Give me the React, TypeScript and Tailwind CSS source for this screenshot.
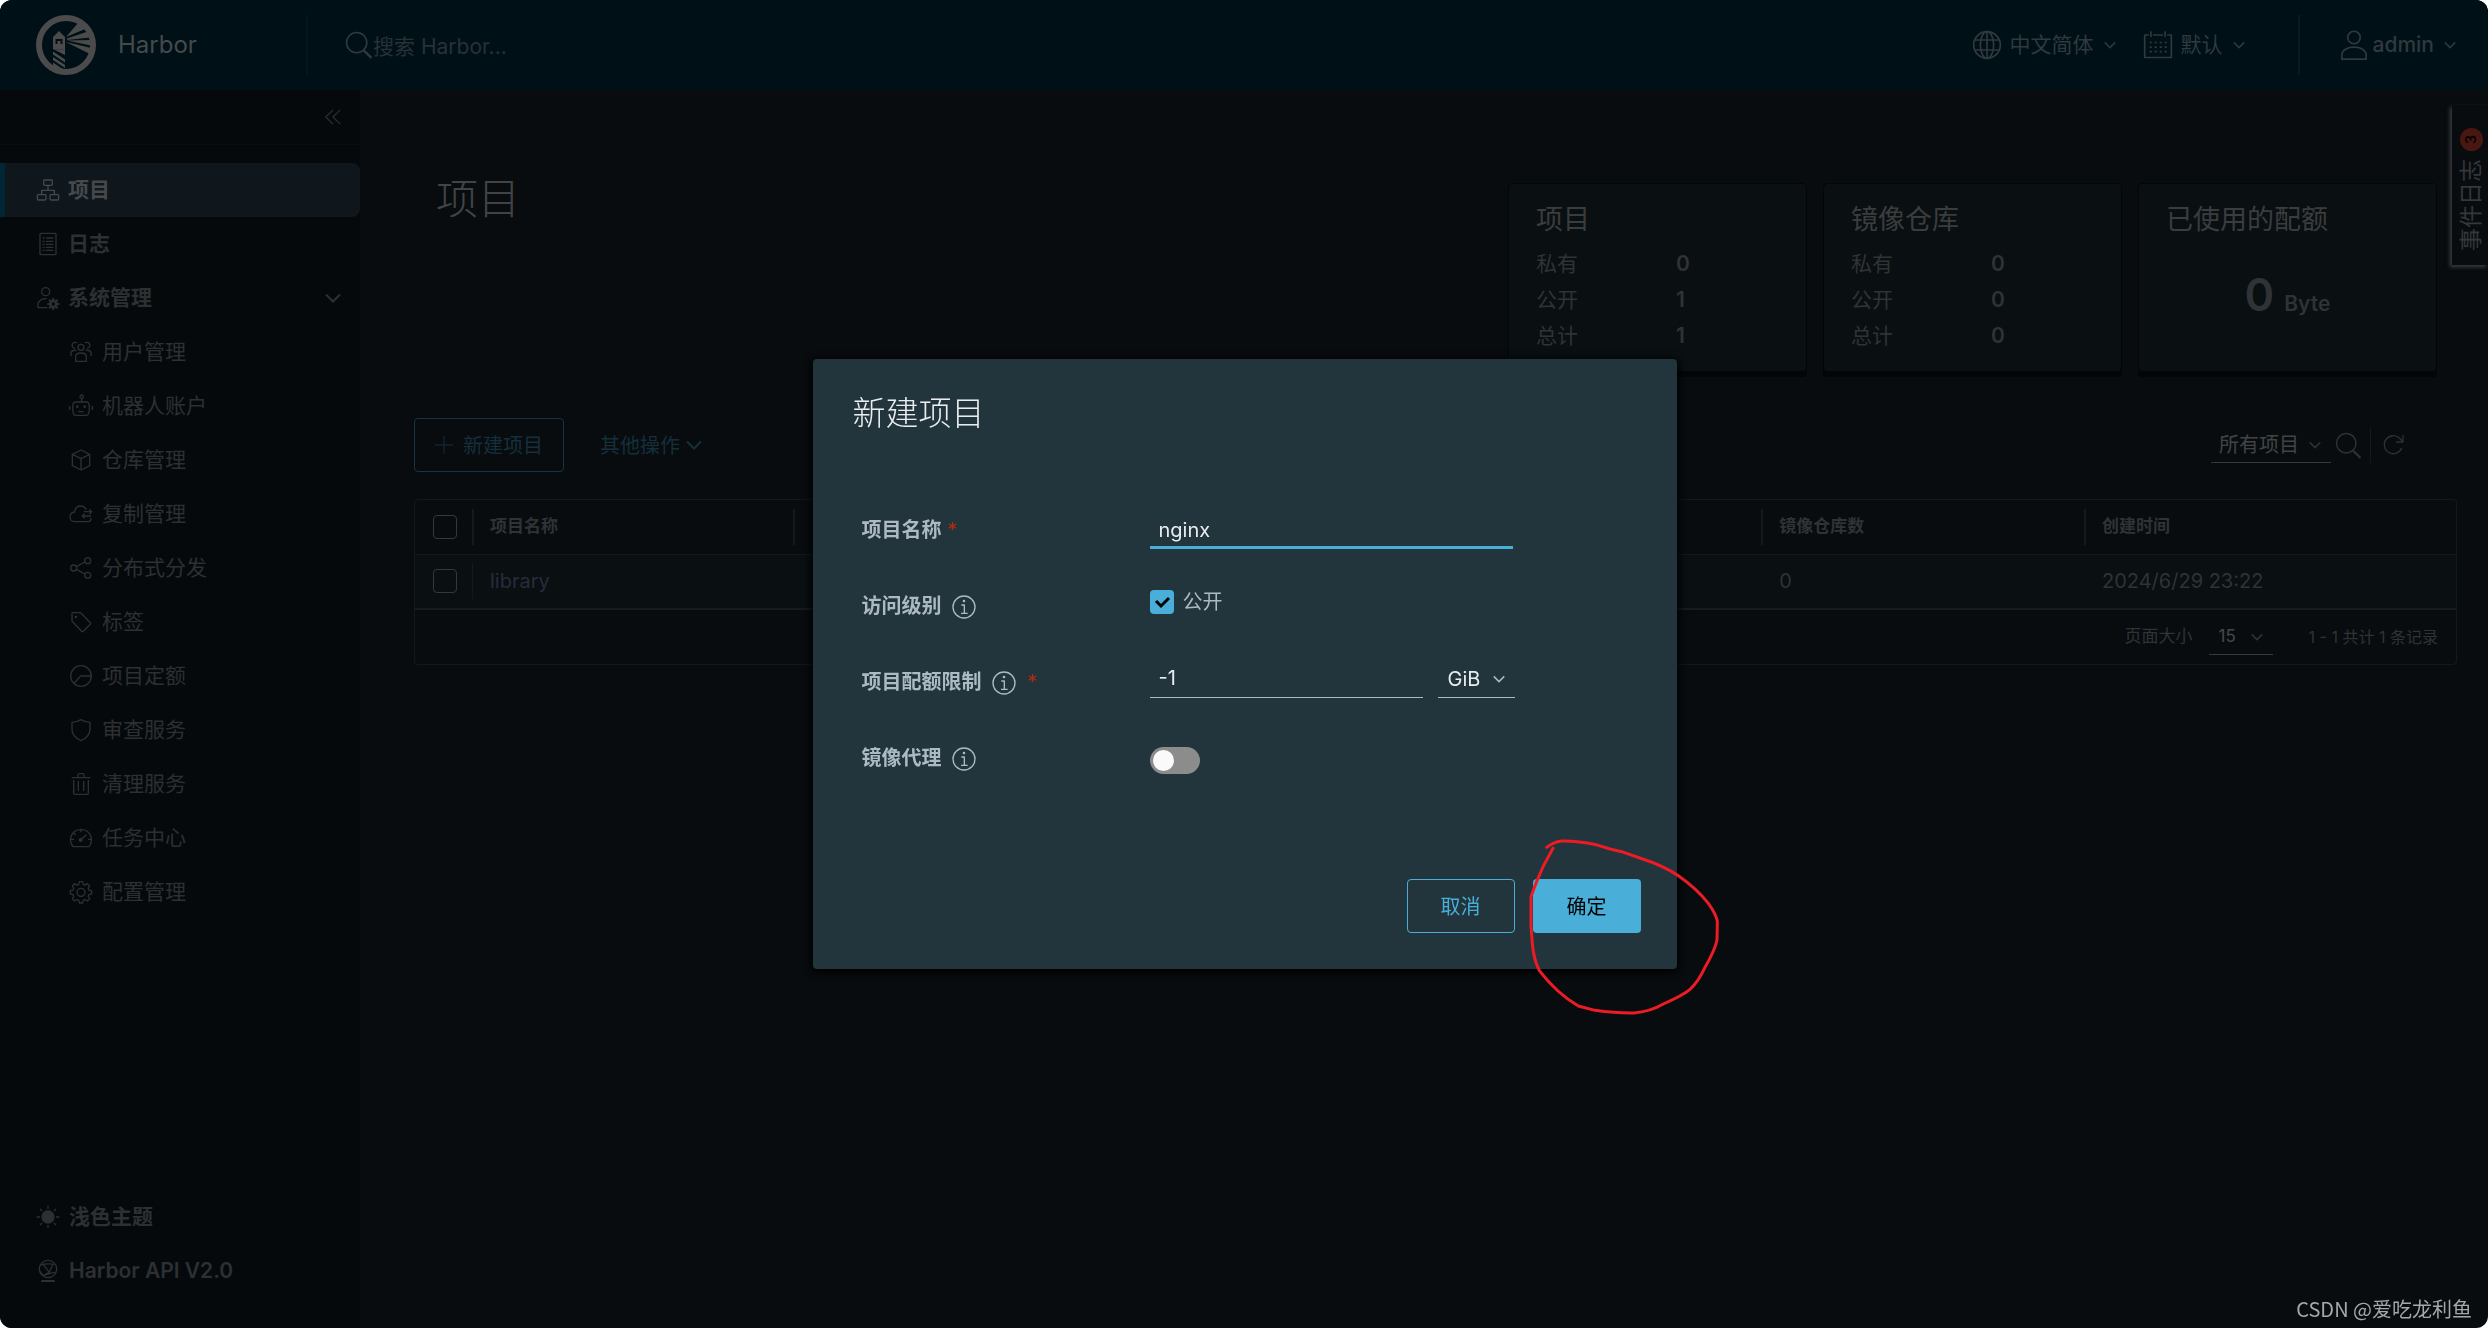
import React from "react";

type IconProps = { className?: string; children: React.ReactNode; strokeWidth?: number };

function Icon({ className = "size-6", children, strokeWidth = 2 }: IconProps) {
  return (
    <svg
      viewBox="0 0 36 36"
      fill="none"
      stroke="currentColor"
      strokeWidth={strokeWidth}
      strokeLinejoin="round"
      aria-hidden="true"
      className={"shrink-0 " + className}
    >
      {children}
    </svg>
  );
}

const gearPath =
  "M15.6 2.5h4.8l1 4.1 2.6 1.1 3.6-2.2 3.4 3.4-2.2 3.6 1.1 2.6 4.1 1v4.8l-4.1 1-1.1 2.6 2.2 3.6-3.4 3.4-3.6-2.2-2.6 1.1-1 4.1h-4.8l-1-4.1-2.6-1.1-3.6 2.2L5 28.1l2.2-3.6-1.1-2.6-4.1-1v-4.8l4.1-1 1.1-2.6L5 8.9l3.4-3.4L12 7.7l2.6-1.1z";

const icons = {
  organization: (
    <>
      <rect x="11.5" y="3" width="13" height="8" rx="1.5" />
      <rect x="2" y="25" width="13" height="8" rx="1.5" />
      <rect x="21" y="25" width="13" height="8" rx="1.5" />
      <path d="M18 11v7M8.500 25v-6.500h19V25" />
    </>
  ),
  log: (
    <>
      <rect x="6" y="2" width="24" height="32" rx="1.500" />
      <path d="M10 9h3M15 9h11M10 14h3M15 14h11M10 18.500h3M15 18.500h11M10 23h3M15 23h11M10 27.500h3M15 27.500h11" />
    </>
  ),
  administrator: (
    <>
      <circle cx="14.500" cy="8.500" r="6" />
      <path d="M17 32.500H3v-6.500c2.500-5 7-7.500 13-7" />
      <circle cx="26" cy="27" r="4.500" strokeWidth="4" />
      <path d="M26 18v4M26 32v4M17 27h4M31 27h4M19.600 20.600l3 3M29.400 30.400l3 3M32.400 20.600l-3 3M22.600 30.400l-3 3" strokeWidth="3" />
    </>
  ),
  users: (
    <>
      <circle cx="18" cy="11" r="4.500" />
      <path d="M10 32v-7c0-4 3-5.500 8-5.500s8 1.500 8 5.500v7z" />
      <path d="M12 4.500a4.500 4.500 0 1 0-3 8M24 4.500a4.500 4.500 0 1 1 3 8M3 24v-5.500c1-2.500 3.500-3.500 8-3M33 24v-5.500c-1-2.500-3.500-3.500-8-3" />
    </>
  ),
  robot: (
    <>
      <circle cx="19" cy="4" r="2.500" />
      <path d="M19 6.500V12M9.500 12h17c2 0 4 3 4 8s-1 12-4 12h-17c-3 0-4-7-4-12s2-8 4-8zM1 18v6M35 18v6M14 26.500h8" />
      <circle cx="12.500" cy="19" r="1" />
      <circle cx="23.500" cy="19" r="1" />
    </>
  ),
  box: <path d="M18 3L31 9.500v17L18 33 5 26.500v-17zM5 9.500L18 16l13-6.500M18 16v17" />,
  cloud: (
    <>
      <path d="M26 11.500C24 7.500 21 6 17.500 6c-5 0-8.500 3.500-9 9C4 15.500 1.500 18.500 1.500 22.500c0 4 3 7 7 7h20c3 0 4.500-2.500 4.500-5.500" />
      <path d="M22 14.500h12M30.500 11l3.500 3.500-3.500 3.500M33 21H20M23.500 17.500L20 21l3.500 3.500" />
    </>
  ),
  share: (
    <>
      <circle cx="7" cy="18" r="4.500" />
      <circle cx="28" cy="7" r="4.500" />
      <circle cx="28" cy="29" r="4.500" />
      <path d="M11 16l13-7M11 20l13 7" />
    </>
  ),
  tag: (
    <>
      <path d="M5 4h12.500L32 19c.8.800.8 1.600 0 2.400L21.500 32c-.8.800-1.600.8-2.400 0L4.500 17V5z" />
      <circle cx="10.500" cy="10.500" r="1" />
    </>
  ),
  pie: (
    <>
      <circle cx="18" cy="18" r="15.500" />
      <path d="M33 18H17.500L7.500 29" />
    </>
  ),
  shield: <path d="M18 2.500c4 2.500 8.500 4 13.500 4v10C31.500 25 26 30.500 18 34 10 30.500 4.500 25 4.500 16.500v-10c5 0 9.500-1.500 13.500-4z" />,
  trash: (
    <>
      <path d="M4 8.500h28M7 12v20c0 1 .5 1.500 1.500 1.500h19c1 0 1.500-.5 1.500-1.500V12" />
      <path d="M13.500 8V4c0-1 .5-1.500 1.500-1.500h6c1 0 1.500.5 1.500 1.500v4M14 13.500v15M22 13.500v15" />
    </>
  ),
  dashboard: (
    <>
      <path d="M6 31C-1 22 2 6 18 5c16 1 19 17 12 26z" />
      <path d="M18 5v4.500M7 10.500l3 3M3 20h4.500M28.500 20H33M17.500 20.500L26 13" />
      <circle cx="17.500" cy="21" r="2" fill="currentColor" />
    </>
  ),
  gear: (
    <>
      <path d={gearPath} />
      <circle cx="18" cy="18.500" r="6" />
    </>
  ),
  sun: (
    <>
      <circle cx="18" cy="18" r="9" fill="currentColor" />
      <path d="M18 1v5M18 30v5M1 18h5M30 18h5M6 6l3 3M27 27l3 3M30 6l-3 3M9 27l-3 3" />
    </>
  ),
  api: (
    <>
      <circle cx="18" cy="15" r="13" />
      <path d="M8 33h20" strokeWidth="3" />
      <path d="M7 9c7-2 13-2 21-1M5.500 18l5.500 7c8-3 13-5 19-5M10 7l10 13 5-11M11 25l9-5" />
    </>
  ),
  globe: (
    <>
      <circle cx="18" cy="18" r="16" />
      <ellipse cx="18" cy="18" rx="8" ry="16" />
      <path d="M18 2v32M3.500 12h29M3.500 24h29" />
    </>
  ),
  calendar: (
    <>
      <path d="M7 6H2v27h32V6h-5M12 6h12M9.500 1.500v7M26.500 1.500v7" />
      <path d="M8 15h21M8 20.500h21M8 26h21" strokeDasharray="2.500 3.500" />
    </>
  ),
  user: (
    <>
      <circle cx="18" cy="9" r="7.500" />
      <path d="M3.500 35V28c2-4.500 7.500-7.500 14.500-7.500S30.500 23.500 32.500 28v7z" />
    </>
  ),
  search: (
    <>
      <circle cx="15" cy="15" r="13" />
      <path d="M24 25l10 9.500" strokeWidth="3" />
    </>
  ),
  refresh: <path d="M31 22.500A13.500 13.500 0 1 1 28 8l5 5M33 3v10.500H22.500" />,
  info: (
    <>
      <circle cx="18" cy="18" r="16.500" />
      <path d="M14 15h4.500v12M13.500 27.500h10" />
      <circle cx="18" cy="9" r="1" fill="currentColor" />
    </>
  ),
  doubleLeft: <path d="M18 5L5 18l13 13M31 5L18 18l13 13" />,
};

function Chevron({ className }: { className: string }) {
  return (
    <svg viewBox="0 0 16 10" fill="none" stroke="currentColor" strokeWidth="2" aria-hidden="true" className={"shrink-0 " + className}>
      <path d="M1 1.500l7 7 7-7" />
    </svg>
  );
}

function HarborLogo() {
  return (
    <svg viewBox="0 0 60 60" className="size-15 shrink-0 text-[#4b4b4b]" fill="currentColor" aria-label="Harbor logo">
      <circle cx="30" cy="30" r="27" fill="none" stroke="currentColor" strokeWidth="6" />
      <path d="M23 16l6 6v2H17v-2zM17 24h2.500v6H17zM26.500 24H29v6h-2.500zM21.500 26h3v3h-3zM17 29h12v6l-12-1z" />
      <path d="M17 34l12 1v5zM17 36.500l12 8v3l-12-8zM17 42l12 8v3l-12-8zM17 47.500l12 8V58l-12-4z" />
      <path d="M30 22L42 8l7 6zM31 23.500l21-7 2 6-23 2.500zM31 25.500l24-.5v5.500zM30 27l25 6-1 6z" />
    </svg>
  );
}

type NavEntry = { label: string; icon: keyof typeof icons };

const children: NavEntry[] = [
  { label: "用户管理", icon: "users" },
  { label: "机器人账户", icon: "robot" },
  { label: "仓库管理", icon: "box" },
  { label: "复制管理", icon: "cloud" },
  { label: "分布式分发", icon: "share" },
  { label: "标签", icon: "tag" },
  { label: "项目定额", icon: "pie" },
  { label: "审查服务", icon: "shield" },
  { label: "清理服务", icon: "trash" },
  { label: "任务中心", icon: "dashboard" },
  { label: "配置管理", icon: "gear" },
];

function Header() {
  return (
    <header className="flex h-[90px] shrink-0 items-center bg-[#001017] pr-8 text-[21px] text-[#2f393e]">
      <a href="#home" className="flex w-[306px] items-center gap-[22px] pl-9 text-2xl text-[#46494b]">
        <HarborLogo />
        Harbor
      </a>
      <div className="h-15 w-0.5 bg-[#06161f]" />
      <label className="flex flex-1 items-center pl-[37px]">
        <Icon className="size-7" strokeWidth={2}>{icons.search}</Icon>
        <input
          aria-label="搜索"
          placeholder="搜索 Harbor..."
          className="w-80 bg-transparent pt-1 outline-none placeholder:text-[#273136]"
        />
      </label>
      <button className="flex items-center">
        <Icon className="size-[30px]">{icons.globe}</Icon>
        <span className="ml-2">中文简体</span>
        <Chevron className="ml-2.5 h-2 w-3" />
      </button>
      <button className="ml-[27px] flex items-center">
        <Icon className="size-[30px]">{icons.calendar}</Icon>
        <span className="ml-2">默认</span>
        <Chevron className="ml-2.5 h-2 w-3" />
      </button>
      <div className="ml-[53px] h-15 w-0.5 bg-[#0a1a24]" />
      <button className="ml-[39px] flex items-center">
        <Icon className="size-[30px]">{icons.user}</Icon>
        <span className="ml-1 font-medium">admin</span>
        <Chevron className="ml-2.5 h-2 w-3" />
      </button>
    </header>
  );
}

function Sidebar() {
  return (
    <nav className="flex w-[360px] shrink-0 flex-col bg-[#05090b] text-[21px] text-[#2c3033]">
      <div className="flex h-[55px] items-center justify-end border-b border-[#080d10] pr-[17px]">
        <button aria-label="收起">
          <Icon className="size-5" strokeWidth={2}>{icons.doubleLeft}</Icon>
        </button>
      </div>
      <div className="mt-[18px] font-bold">
        <a href="#projects" className="flex h-[54px] items-center gap-2 rounded-r-lg border-l-5 border-[#002737] bg-[#0f161c] pl-[31px] text-[#46494b]">
          <Icon>{icons.organization}</Icon>
          项目
        </a>
        <a href="#logs" className="flex h-[54px] items-center gap-2 pl-9">
          <Icon>{icons.log}</Icon>
          日志
        </a>
        <button className="flex h-[54px] w-full items-center gap-2 pr-[19px] pl-9">
          <Icon>{icons.administrator}</Icon>
          系统管理
          <Chevron className="ml-auto h-2.5 w-4" />
        </button>
      </div>
      {children.map((item) => (
        <a key={item.label} href={"#" + item.icon} className="flex h-[54px] items-center gap-[9px] pl-[69px]">
          <Icon>{icons[item.icon]}</Icon>
          {item.label}
        </a>
      ))}
      <div className="mt-auto mb-[30px]">
        <button className="flex h-[54px] w-full items-center gap-[9px] pl-9 font-bold">
          <Icon>{icons.sun}</Icon>
          浅色主题
        </button>
        <a href="#api" className="flex h-[54px] items-center gap-[9px] pl-9 font-semibold">
          <Icon>{icons.api}</Icon>
          Harbor API V2.0
        </a>
      </div>
    </nav>
  );
}

const cardClass =
  "h-[189px] w-[299px] rounded-sm border border-[#030607] bg-[#0a0f11] px-[27px] pt-4 shadow-[0_5px_0_#030506]";

function StatCard({ title, values }: { title: string; values: number[] }) {
  const labels = ["私有", "公开", "总计"];
  return (
    <section className={cardClass}>
      <h2 className="text-[27px] leading-10 text-[#3a3d3f]">{title}</h2>
      <dl className="mt-1.5 grid grid-cols-[140px_1fr] text-[21px] leading-9">
        {labels.map((label, i) => (
          <React.Fragment key={label}>
            <dt>{label}</dt>
            <dd className="font-semibold">{values[i]}</dd>
          </React.Fragment>
        ))}
      </dl>
    </section>
  );
}

function HeaderCell({ children: content }: { children?: React.ReactNode }) {
  return (
    <th className="h-[54px] p-0 text-left text-[17px] font-bold">
      <div className="flex items-center gap-4">
        <span className="h-9 w-0.5 bg-[#14191c]" />
        {content}
      </div>
    </th>
  );
}

function ProjectTable() {
  const box =
    "block size-6 appearance-none rounded-[4px] border border-[#34383a] bg-transparent";
  return (
    <div className="mt-[27px] overflow-hidden rounded-[4px] border border-[#13181b]">
      <table className="w-full table-fixed border-collapse">
        <colgroup>
          <col className="w-[57px]" />
          <col className="w-[321px]" />
          <col />
          <col />
          <col />
          <col />
          <col className="w-[372px]" />
        </colgroup>
        <thead>
          <tr className="border-b border-[#13181b]">
            <th className="p-0 pl-[18px]">
              <input type="checkbox" aria-label="全选" className={box} />
            </th>
            <HeaderCell>项目名称</HeaderCell>
            <HeaderCell />
            <HeaderCell />
            <HeaderCell />
            <HeaderCell>镜像仓库数</HeaderCell>
            <HeaderCell>创建时间</HeaderCell>
          </tr>
        </thead>
        <tbody>
          <tr className="border-b-2 border-[#161b1e] bg-[#0a0f11] text-[20px]">
            <td className="h-[55px] p-0 pl-[18px]">
              <input type="checkbox" aria-label="library" className={box} />
            </td>
            <td className="p-0">
              <a href="#library" className="flex h-9 items-center border-l border-[#14191c] pl-[17px] text-[#282b3e]">
                library
              </a>
            </td>
            <td />
            <td />
            <td />
            <td className="p-0 pl-[18px]">0</td>
            <td className="p-0 pl-[18px]">2024/6/29 23:22</td>
          </tr>
        </tbody>
        <tfoot>
          <tr>
            <td colSpan={7} className="h-[55px] p-0 pr-[18px]">
              <div className="flex items-center justify-end text-[17px]">
                <label htmlFor="page-size">页面大小</label>
                <span className="relative ml-4 flex items-center">
                  <select
                    id="page-size"
                    defaultValue="15"
                    className="h-9 w-16 appearance-none border-b border-[#34383a] bg-transparent pl-2.5 text-[#46494b] outline-none"
                  >
                    <option>15</option>
                  </select>
                  <Chevron className="pointer-events-none absolute right-2.5 h-2 w-3" />
                </span>
                <span className="ml-9 text-base">1 - 1 共计 1 条记录</span>
              </div>
            </td>
          </tr>
        </tfoot>
      </table>
    </div>
  );
}

function EventTab() {
  return (
    <button className="absolute top-[105px] right-0 h-40 w-9 bg-[#080c0f] text-[#34383a] shadow-[-2px_2px_4px_#3c3f41]">
      <span className="absolute top-[62px] left-[-61px] flex h-9 w-40 -rotate-90 items-center gap-2 pl-3.5 text-[23px]">
        事件日志
        <span className="flex size-[23px] items-center justify-center rounded-full bg-[#491712] text-[15px] font-medium text-black">
          3
        </span>
      </span>
    </button>
  );
}

function Content() {
  return (
    <main className="min-w-0 flex-1 pt-[88px] pr-[31px] pl-[54px]">
      <div className="flex items-start justify-between pr-5 pl-[22px]">
        <h1 className="text-[42px] leading-[42px] font-light text-[#414446]">项目</h1>
        <div className="mt-[5px] flex gap-4">
          <StatCard title="项目" values={[0, 1, 1]} />
          <StatCard title="镜像仓库" values={[0, 0, 0]} />
          <section className={cardClass}>
            <h2 className="text-[27px] leading-10 text-[#3a3d3f]">已使用的配额</h2>
            <p className="mt-7 flex items-baseline justify-center gap-2.5 leading-[54px] font-semibold">
              <span className="text-[45px]">0</span>
              <span className="text-[21px]">Byte</span>
            </p>
          </section>
        </div>
      </div>

      <div className="mt-[46px] flex items-center pr-[52px] text-[20px] text-[#152f3c]">
        <button className="flex h-[54px] w-[150px] items-center justify-center gap-2.5 rounded-[4px] border border-[#163543]">
          <svg viewBox="0 0 18 18" className="size-[18px]" stroke="currentColor" strokeWidth="1" aria-hidden="true">
            <path d="M9 0v18M0 9h18" />
          </svg>
          <span className="pt-0.5">新建项目</span>
        </button>
        <button className="ml-9 flex items-center gap-1.5">
          <span className="pt-0.5">其他操作</span>
          <Chevron className="h-2.5 w-4" />
        </button>
        <div className="ml-auto flex items-center text-[#2d3134]">
          <span className="relative flex items-center">
            <select
              aria-label="项目范围"
              className="h-9 w-30 appearance-none border-b border-[#34383a] bg-transparent pl-2 text-[#414446] outline-none"
            >
              <option>所有项目</option>
            </select>
            <Chevron className="pointer-events-none absolute right-2.5 h-2 w-3" />
          </span>
          <button aria-label="搜索项目" className="ml-1">
            <Icon className="size-[27px]">{icons.search}</Icon>
          </button>
          <span className="ml-2 h-9 w-px bg-[#14191c]" />
          <button aria-label="刷新" className="ml-2.5">
            <Icon className="size-6">{icons.refresh}</Icon>
          </button>
        </div>
      </div>

      <ProjectTable />
    </main>
  );
}

function FieldLabel({ htmlFor, text, info, required }: { htmlFor: string; text: string; info?: boolean; required?: boolean }) {
  return (
    <label htmlFor={htmlFor} className="flex w-72 shrink-0 items-center pt-0.5 font-bold text-[#acbac3]">
      {text}
      {info && (
        <Icon className="mt-0.5 ml-2.5 size-6" strokeWidth={2}>
          {icons.info}
        </Icon>
      )}
      {required && <span className={info ? "ml-3 font-normal text-[#b32b12]" : "ml-1.5 font-normal text-[#b32b12]"}>*</span>}
    </label>
  );
}

function NewProjectDialog() {
  return (
    <div className="fixed inset-0 flex items-center justify-center">
      <div
        role="dialog"
        aria-label="新建项目"
        className="relative flex w-[864px] flex-col rounded-[4px] bg-[#22343c] pt-9 pb-9 text-[20px] text-[#acbac3] shadow-[0_2px_8px_2px_#000]"
      >
        <h2 className="px-10 text-[33px] leading-9 font-light text-[#eaedf0]">新建项目</h2>
        <form className="mt-[60px] pl-[49px]">
          <div className="flex h-[76px] items-center">
            <FieldLabel htmlFor="name" text="项目名称" required />
            <input
              id="name"
              defaultValue="nginx"
              className="h-10 w-[363px] border-b-3 border-[#49afd9] bg-transparent px-[9px] pt-1 text-[#eaedf0] outline-none"
            />
          </div>
          <div className="flex h-[76px] items-center">
            <FieldLabel htmlFor="public" text="访问级别" info />
            <span className="relative -mt-1.5 flex items-center gap-[9px]">
              <input
                id="public"
                type="checkbox"
                defaultChecked
                className="size-6 appearance-none rounded-[4px] bg-[#49afd9]"
              />
              <svg viewBox="0 0 24 24" className="pointer-events-none absolute left-0 size-6" fill="none" stroke="#000" strokeWidth="3" aria-hidden="true">
                <path d="M6 11l5 5 8-8" />
              </svg>
              <label htmlFor="public">公开</label>
            </span>
          </div>
          <div className="flex h-[76px] items-center">
            <FieldLabel htmlFor="quota" text="项目配额限制" info required />
            <input
              id="quota"
              defaultValue="-1"
              className="h-[34px] w-[273px] border-b border-[#acbac3] bg-transparent px-[9px] pb-1.5 text-[#eaedf0] outline-none"
            />
            <span className="relative ml-[15px] flex items-center">
              <select
                aria-label="单位"
                className="h-[34px] w-[77px] appearance-none border-b border-[#acbac3] bg-transparent pb-1.5 pl-2.5 text-[#eaedf0] outline-none"
              >
                <option>GiB</option>
              </select>
              <Chevron className="pointer-events-none absolute right-2.5 mb-1 h-2 w-3" />
            </span>
          </div>
          <div className="flex h-[76px] items-center">
            <FieldLabel htmlFor="proxy" text="镜像代理" info />
            <input
              id="proxy"
              type="checkbox"
              role="switch"
              className="mt-1.5 h-[27px] w-[50px] appearance-none rounded-full bg-[#8c8c8c] p-[3px] before:block before:size-[21px] before:rounded-full before:bg-[#fafafa]"
            />
          </div>
        </form>
        <div className="mt-21 flex justify-end gap-[18px] pr-9">
          <button className="h-[54px] w-27 rounded-[4px] border border-[#49afd9] pt-0.5 text-[#49afd9]">取消</button>
          <button className="h-[54px] w-27 rounded-[4px] bg-[#49afd9] pt-0.5 text-black">确定</button>
        </div>
        <svg
          viewBox="0 0 1200 780"
          className="pointer-events-none absolute top-[421px] left-[547px] h-[260px] w-[400px]"
          fill="none"
          stroke="#ed1c24"
          strokeWidth="9"
          strokeLinecap="round"
          strokeLinejoin="round"
          aria-hidden="true"
        >
          <path d="M560 202Q580 186 605 183Q650 182 708 194L750 207L785 215L848 237Q910 257 955 287Q1010 325 1045 370Q1070 405 1072 425L1071 480Q1065 510 1035 562Q1015 605 990 628Q970 645 910 672Q870 695 822 699Q770 700 705 691L655 678Q590 640 538 572Q520 535 517 490L513 440V350Q520 330 530 305L550 258L579 205" />
        </svg>
      </div>
    </div>
  );
}

export default function App() {
  return (
    <div className="bg-white pr-px font-['Inter','Noto_Sans_CJK_SC',sans-serif]">
      <div className="relative flex min-h-screen flex-col overflow-hidden rounded-xl bg-[#080c0f] text-[#2f3336]">
        <Header />
        <div className="flex flex-1">
          <Sidebar />
          <Content />
        </div>
        <EventTab />
        <NewProjectDialog />
        <span className="absolute right-4 bottom-1 font-['Noto_Sans_CJK_SC',sans-serif] text-[20px] leading-[30px] text-[#a5a7a8]">
          CSDN @爱吃龙利鱼
        </span>
      </div>
    </div>
  );
}
